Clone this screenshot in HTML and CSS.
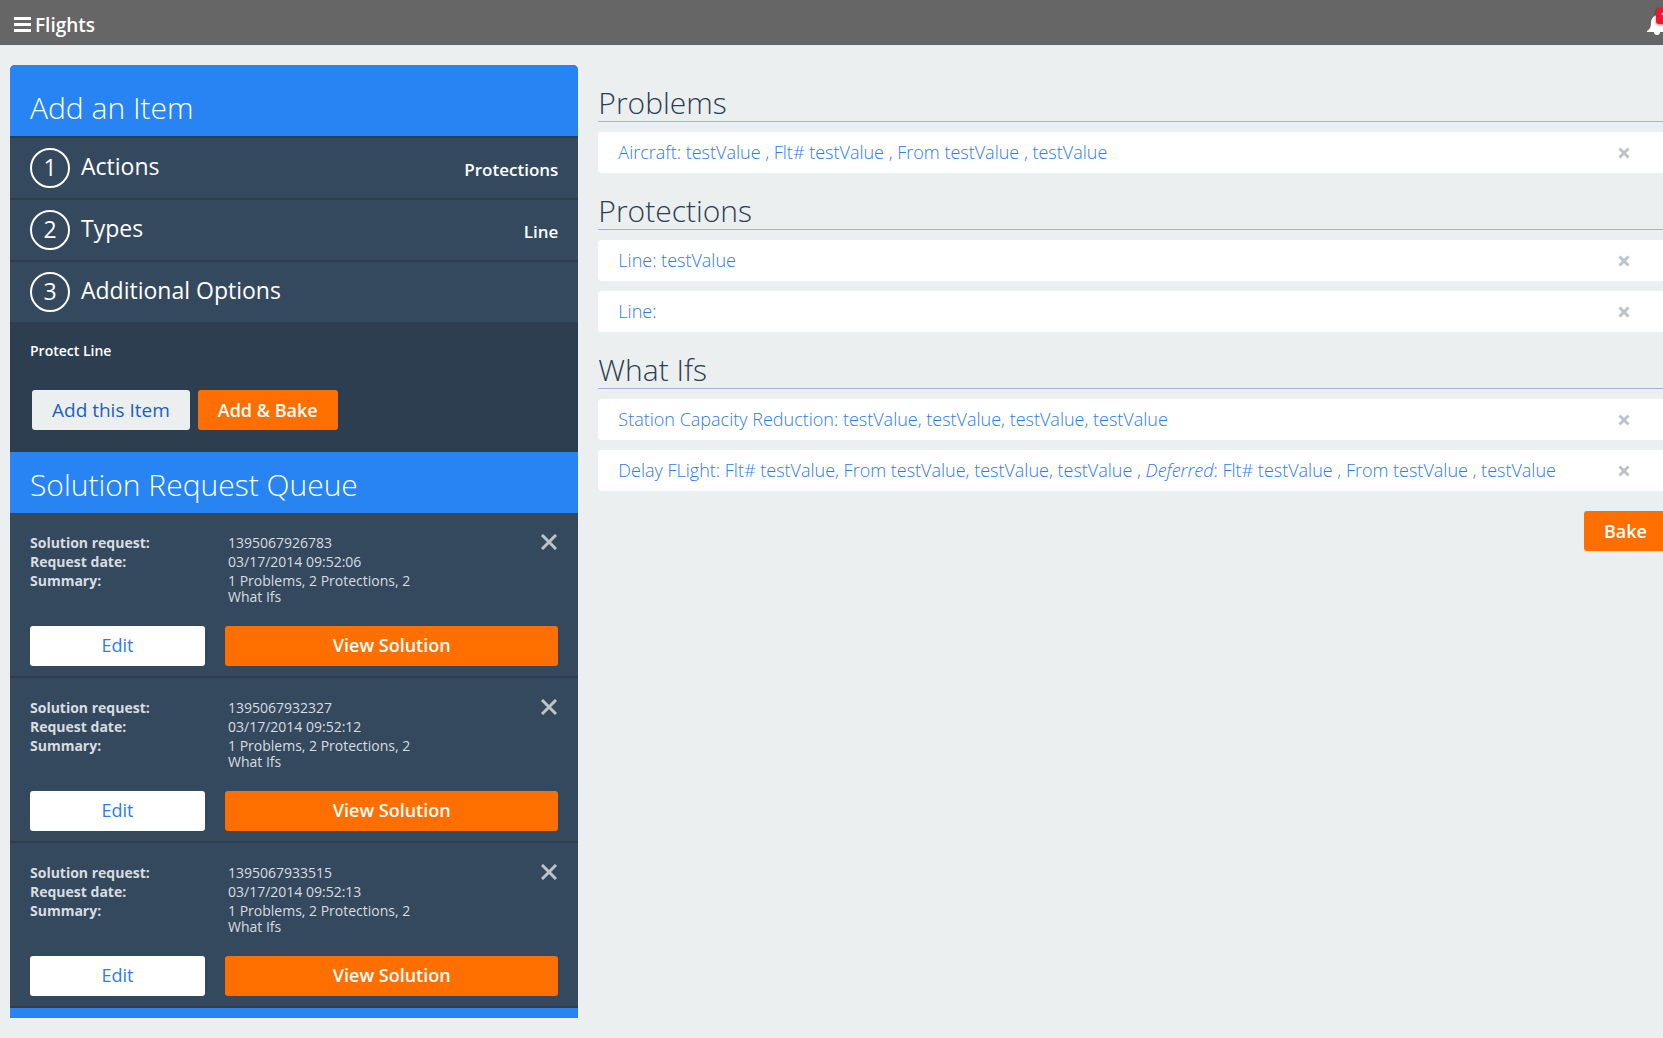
FILE: index.html
```html
<!DOCTYPE html>
<html lang="en">
<head>
<meta charset="utf-8">
<title>Flights</title>
<link rel="stylesheet" href="styles.css">
</head>
<body>
<svg class="defs" aria-hidden="true">
  <symbol id="cross" viewBox="0 0 16 16"><path d="M2 2L14 14M14 2L2 14" fill="none" stroke="currentColor" stroke-width="4"/></symbol>
  <symbol id="cross-thin" viewBox="0 0 16 16"><path d="M1 1L15 15M15 1L1 15" fill="none" stroke="currentColor" stroke-width="3"/></symbol>
</svg>
<div class="page">
  <header class="topbar">
    <button class="menu" type="button" aria-label="Menu">
      <svg width="17" height="15" viewBox="0 0 17 15"><path d="M0 0h17v3H0zM0 6h17v3H0zM0 12h17v3H0z" fill="#fff"/></svg>
    </button>
    <span class="brand">Flights</span>
    <button class="alerts" type="button" aria-label="Notifications">
      <svg width="20" height="20" viewBox="0 0 20 20"><path d="M10 0C6 1 4 4 4 8c0 4-1 6-4 8v1h7a3 3 0 0 0 6 0h7v-1c-3-2-4-4-4-8 0-4-2-7-6-8z" fill="#fff"/></svg>
      <span class="badge">1</span>
    </button>
  </header>
  <div class="columns">
    <aside class="panel">
      <h2 class="panel-title panel-title-top">Add an Item</h2>
      <ol class="steps">
        <li class="step"><span class="num">1</span><span class="step-name">Actions</span><span class="choice">Protections</span></li>
        <li class="step"><span class="num">2</span><span class="step-name">Types</span><span class="choice">Line</span></li>
        <li class="step"><span class="num">3</span><span class="step-name">Additional Options</span></li>
      </ol>
      <div class="options">
        <p class="options-text">Protect Line</p>
        <div class="options-actions">
          <button class="btn btn-plain" type="button">Add this Item</button>
          <button class="btn btn-bake" type="button">Add &amp; Bake</button>
        </div>
      </div>
      <h2 class="panel-title">Solution Request Queue</h2>
      <section class="request">
        <dl class="facts">
          <dt>Solution request:</dt><dd>1395067926783</dd>
          <dt>Request date:</dt><dd>03/17/2014 09:52:06</dd>
          <dt>Summary:</dt><dd class="summary">1 Problems, 2 Protections, 2 What Ifs</dd>
        </dl>
        <button class="close" type="button" aria-label="Remove request"><svg width="16" height="16"><use href="#cross-thin"/></svg></button>
        <div class="request-actions">
          <button class="btn btn-edit" type="button">Edit</button>
          <button class="btn btn-view" type="button">View Solution</button>
        </div>
      </section>
      <section class="request">
        <dl class="facts">
          <dt>Solution request:</dt><dd>1395067932327</dd>
          <dt>Request date:</dt><dd>03/17/2014 09:52:12</dd>
          <dt>Summary:</dt><dd class="summary">1 Problems, 2 Protections, 2 What Ifs</dd>
        </dl>
        <button class="close" type="button" aria-label="Remove request"><svg width="16" height="16"><use href="#cross-thin"/></svg></button>
        <div class="request-actions">
          <button class="btn btn-edit" type="button">Edit</button>
          <button class="btn btn-view" type="button">View Solution</button>
        </div>
      </section>
      <section class="request">
        <dl class="facts">
          <dt>Solution request:</dt><dd>1395067933515</dd>
          <dt>Request date:</dt><dd>03/17/2014 09:52:13</dd>
          <dt>Summary:</dt><dd class="summary">1 Problems, 2 Protections, 2 What Ifs</dd>
        </dl>
        <button class="close" type="button" aria-label="Remove request"><svg width="16" height="16"><use href="#cross-thin"/></svg></button>
        <div class="request-actions">
          <button class="btn btn-edit" type="button">Edit</button>
          <button class="btn btn-view" type="button">View Solution</button>
        </div>
      </section>
    </aside>
    <main class="content">
      <section class="group">
        <h2 class="group-title">Problems</h2>
        <div class="card"><a href="#">Aircraft: testValue , Flt# testValue , From testValue , testValue</a><button class="remove" type="button" aria-label="Remove"><svg width="12" height="12"><use href="#cross"/></svg></button></div>
      </section>
      <section class="group">
        <h2 class="group-title">Protections</h2>
        <div class="card"><a href="#">Line: testValue</a><button class="remove" type="button" aria-label="Remove"><svg width="12" height="12"><use href="#cross"/></svg></button></div>
        <div class="card"><a href="#">Line:</a><button class="remove" type="button" aria-label="Remove"><svg width="12" height="12"><use href="#cross"/></svg></button></div>
      </section>
      <section class="group">
        <h2 class="group-title">What Ifs</h2>
        <div class="card"><a href="#">Station Capacity Reduction: testValue, testValue, testValue, testValue</a><button class="remove" type="button" aria-label="Remove"><svg width="12" height="12"><use href="#cross"/></svg></button></div>
        <div class="card"><a href="#">Delay FLight: Flt# testValue, From testValue, testValue, testValue , <em>Deferred</em>: Flt# testValue , From testValue , testValue</a><button class="remove" type="button" aria-label="Remove"><svg width="12" height="12"><use href="#cross"/></svg></button></div>
      </section>
      <div class="bake-row"><button class="btn btn-bake" type="button">Bake</button></div>
    </main>
  </div>
</div>
</body>
</html>
```
FILE: styles.css
```css
* { box-sizing: border-box; }
body {
  margin: 0;
  overflow-x: hidden;
  background: #ebeff0;
  color: #2c3e50;
  font-family: "Open Sans", sans-serif;
  font-size: 18px;
}
h2, p, ol, dl, dd { margin: 0; padding: 0; }
button {
  margin: 0;
  padding: 0;
  border: 0;
  background: none;
  color: inherit;
  font: inherit;
  cursor: pointer;
}
svg { display: block; }
.defs { position: absolute; width: 0; height: 0; }

/* The page runs slightly past the right edge of the window. */
.page { width: calc(100% + 4px); }

.topbar {
  display: flex;
  align-items: center;
  gap: 4px;
  height: 45px;
  padding: 4px 0 0 14px;
  background: #666;
  color: #fff;
}
.brand { font-size: 19px; font-weight: 600; line-height: 24px; }
.alerts { position: relative; margin-left: auto; }
.badge {
  position: absolute;
  top: -7px;
  left: 9px;
  width: 16px;
  height: 16px;
  border-radius: 3px;
  background: #f5142f;
  box-shadow: 0 1px 3px rgba(0, 0, 0, .5);
  font-size: 11px;
  font-weight: 700;
  line-height: 16px;
  text-align: center;
}

.columns { display: flex; align-items: flex-start; gap: 20px; padding: 20px 0 20px 10px; }
.panel { flex: 0 0 34.3%; border-radius: 5px 5px 0 0; border-bottom: 10px solid #2784f2; background: #34495e; color: #fff; overflow: hidden; }
.panel-title { padding: 13px 20px 8px; background: #2784f2; font-size: 30px; font-weight: 300; line-height: 40px; }
.panel-title-top { padding: 23px 20px 8px; }

.steps { list-style: none; }
.step { display: flex; align-items: center; height: 62px; padding: 0 20px; border-top: 2px solid #2c3e50; }
.num { width: 40px; height: 40px; margin-right: 11px; border: 2px solid #fff; border-radius: 50%; font-size: 23px; line-height: 34px; text-align: center; }
.step-name { font-size: 23px; line-height: 32px; padding-bottom: 4px; }
.choice { margin-left: auto; font-size: 17px; font-weight: 600; padding-top: 3px; }

.options { padding: 19px 20px 22px; background: #2c3e50; }
.options-text { font-size: 14px; font-weight: 600; line-height: 20px; }
.options-actions { display: flex; gap: 8px; padding: 29px 2px 0; }
.btn { height: 40px; border-radius: 3px; font-size: 18px; line-height: 38px; padding-bottom: 2px; text-align: center; }
.btn-plain { padding: 0 20px; background: #ebeff0; color: #1f5fbf; font-size: 19px; line-height: 40px; }
.btn-bake { padding: 0 20px; background: #ff6f00; color: #fff; font-weight: 600; line-height: 40px; }

.request { position: relative; padding: 20px 20px 10px; border-bottom: 2px solid #2c3e50; }
.facts { display: grid; grid-template-columns: 198px 200px; color: #d9dde0; font-size: 14px; line-height: 19px; }
.facts dt { font-weight: 700; }
.facts .summary { padding: 2px 0 1px; line-height: 16px; }
.close { position: absolute; top: 21px; right: 21px; color: #bdc3c7; }
.request-actions { display: flex; gap: 20px; padding-top: 20px; }
.btn-edit { flex: 175; background: #fff; color: #2b7cf0; }
.btn-view { flex: 333; background: #ff6f00; color: #fff; font-weight: 600; }

.content { flex: 1; min-width: 0; }
.group { display: grid; gap: 10px; margin-bottom: 20px; }
.group-title { height: 37px; border-bottom: 1px solid #a9afdc; font-size: 30px; font-weight: 300; line-height: 36px; }
.group:first-child { padding-top: 20px; }
.card { display: flex; align-items: center; justify-content: space-between; height: 41px; padding: 0 37px 0 20px; border-radius: 4px; background: #fff; white-space: nowrap; }
.card a { padding-bottom: 2px; color: #2b7cf0; font-weight: 300; text-decoration: none; }
.remove { color: #bdc3c7; }
.bake-row { display: flex; justify-content: flex-end; }
```
